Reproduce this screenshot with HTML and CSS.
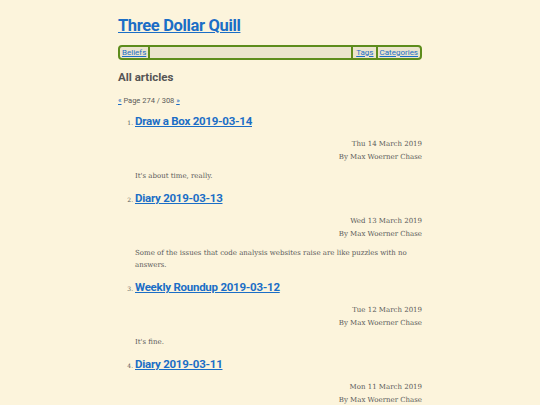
FILE: index.html
```html
<!DOCTYPE html>
<html lang="en">
<head>
<meta charset="utf-8">
<title>Three Dollar Quill</title>
<link rel="stylesheet" href="styles.css">
</head>
<body>
<div class="page">
  <header class="site-header">
    <h1 class="site-title"><a href="#">Three Dollar Quill</a></h1>
    <nav class="nav">
      <a class="nav-link sep-right" href="#">Beliefs</a>
      <span class="nav-spacer"></span>
      <a class="nav-link sep-left sep-right" href="#">Tags</a>
      <a class="nav-link" href="#">Categories</a>
    </nav>
  </header>
  <main>
    <h2 class="section-title">All articles</h2>
    <p class="pager"><a href="#">«</a> Page 274 / 308 <a href="#">»</a></p>
    <ol class="articles">
      <li class="article">
        <h3 class="article-title"><a href="#">Draw a Box 2019-03-14</a></h3>
        <div class="meta">
          <div>Thu 14 March 2019</div>
          <div>By Max Woerner Chase</div>
        </div>
        <p class="summary">It's about time, really.</p>
      </li>
      <li class="article">
        <h3 class="article-title"><a href="#">Diary 2019-03-13</a></h3>
        <div class="meta">
          <div>Wed 13 March 2019</div>
          <div>By Max Woerner Chase</div>
        </div>
        <p class="summary">Some of the issues that code analysis websites raise are like puzzles with no answers.</p>
      </li>
      <li class="article">
        <h3 class="article-title"><a href="#">Weekly Roundup 2019-03-12</a></h3>
        <div class="meta">
          <div>Tue 12 March 2019</div>
          <div>By Max Woerner Chase</div>
        </div>
        <p class="summary">It's fine.</p>
      </li>
      <li class="article">
        <h3 class="article-title"><a href="#">Diary 2019-03-11</a></h3>
        <div class="meta">
          <div>Mon 11 March 2019</div>
          <div>By Max Woerner Chase</div>
        </div>
      </li>
    </ol>
  </main>
</div>
</body>
</html>
```
FILE: styles.css
```css
html, body {
  margin: 0;
  padding: 0;
  background: #fcf4dc;
}
body {
  font-family: "DejaVu Serif", serif;
  color: #5a5a5a;
  font-size: 7px;
}
.page {
  width: 304px;
  margin: 0 auto;
  padding-top: 15px;
}
a {
  color: #1b6ec6;
}
.site-title {
  margin: 0;
  font-family: Roboto, "Open Sans", sans-serif;
  font-size: 16.5px;
  font-weight: 700;
  line-height: 22px;
  letter-spacing: -0.35px;
}
.nav {
  display: flex;
  margin-top: 8px;
  border: 2px solid #5d8c1c;
  border-radius: 4px;
  background: #ebe4cd;
  font-family: Roboto, "Open Sans", sans-serif;
  font-size: 8px;
  line-height: 11px;
}
.nav-link {
  padding: 0 2px;
}
.sep-right {
  border-right: 2px solid #5d8c1c;
}
.sep-left {
  border-left: 2px solid #5d8c1c;
  padding-left: 3px;
}
.nav-spacer {
  flex: 1;
}
.section-title {
  margin: 8px 0 0;
  font-family: Roboto, "Open Sans", sans-serif;
  font-size: 11.5px;
  font-weight: 700;
  line-height: 18px;
  color: #555;
}
.pager {
  margin: 9px 0 0;
  font-family: Roboto, "Open Sans", sans-serif;
  font-size: 7.5px;
  line-height: 12px;
}
.articles {
  margin: 5px 0 0;
  padding-left: 17px;
}
.article {
  font-size: 6px;
}
.article-title {
  margin: 0;
  font-family: Roboto, "Open Sans", sans-serif;
  font-size: 11.5px;
  font-weight: 700;
  line-height: 18px;
  letter-spacing: -0.25px;
}
.meta {
  margin-top: 8px;
  text-align: right;
  font-size: 7px;
  line-height: 12.5px;
}
.summary {
  margin: 7px 0 0;
  font-size: 7px;
  line-height: 12px;
  padding-bottom: 7px;
}
```
